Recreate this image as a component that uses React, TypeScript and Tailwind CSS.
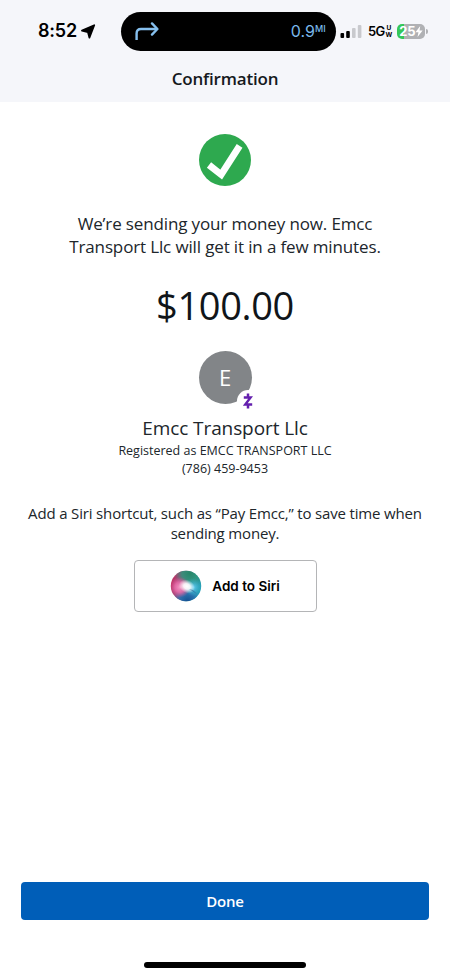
function StatusBar() {
  return (
    <div className="flex h-[62px] items-center text-black">
      <div className="flex w-[121px] items-center pl-[38px]">
        <span className="font-['Inter'] text-[18px] leading-none font-semibold tracking-[-0.2px]">8:52</span>
        <svg className="ml-[4px] h-[15px] w-[15px] shrink-0" viewBox="0 0 15 15">
          <path d="M1 6.6 L13.2 1.2 L8.4 13.6 L7 8.2 Z" fill="#000" stroke="#000" strokeWidth="1.8" strokeLinejoin="round" />
        </svg>
      </div>
      <div className="flex h-[39px] w-[215px] shrink-0 items-center justify-between rounded-full bg-black pr-[10px] pl-[13px] text-[#7ab8ea]">
        <svg className="h-[20px] w-[25px]" viewBox="0 0 25 20" fill="none" stroke="#86c0ee" strokeWidth="2.4" strokeLinejoin="round">
          <path d="M2.6 19 V12.5 Q2.6 8 7 8 H22" />
          <path d="M18 2.4 L23.4 8 L18 13.6" strokeLinecap="round" />
        </svg>
        <div className="flex items-start font-['Inter'] leading-none">
          <span className="text-[16px]">0.9</span>
          <span className="mt-px text-[9px] font-medium tracking-[0.2px]">MI</span>
        </div>
      </div>
      <div className="flex items-center pl-[4px]">
        <svg className="h-[15px] w-[23px]" viewBox="0 0 23 15">
          <rect x="0.5" y="9" width="3.6" height="5" rx="1" fill="#000" />
          <rect x="6.2" y="7" width="3.6" height="7" rx="1" fill="#000" />
          <rect x="12" y="4" width="3.6" height="10" rx="1" fill="#c8c9cd" />
          <rect x="17.8" y="1" width="3.6" height="13" rx="1" fill="#c8c9cd" />
        </svg>
        <span className="ml-[5px] font-['Inter'] text-[13px] leading-none font-semibold tracking-[-0.7px]">5G</span>
        <span className="ml-[1px] flex flex-col items-center font-['Inter'] text-[6.5px] leading-[7px] font-bold">
          <span>U</span>
          <span className="leading-[6px]">W</span>
        </span>
        <div className="ml-[5px] flex h-[15px] w-[28px] items-center justify-center rounded-[5px] bg-linear-to-r from-[#34c759] from-25% to-[#b0b1b4] to-25% text-white">
          <span className="font-['Inter'] text-[13px] leading-none font-bold tracking-[-0.2px]">25</span>
          <svg className="h-[11px] w-[8px]" viewBox="0 0 7 10">
            <path d="M4.6 0 L0.3 5.6 H3 L2.2 10 L6.8 4.2 H4 Z" fill="#fff" />
          </svg>
        </div>
        <div className="ml-[1px] h-[5px] w-[1.5px] rounded-r-full bg-[#b0b1b4]" />
      </div>
    </div>
  );
}

function SiriOrb() {
  return (
    <svg className="h-[32px] w-[32px]" viewBox="0 0 32 32">
      <defs>
        <linearGradient id="orbBase" x1="0" y1="0.3" x2="1" y2="0.6">
          <stop offset="0" stopColor="#c42f62" />
          <stop offset="0.38" stopColor="#8a5080" />
          <stop offset="0.65" stopColor="#2a8d90" />
          <stop offset="1" stopColor="#239fb4" />
        </linearGradient>
        <radialGradient id="orbGreen" cx="0.62" cy="0.08" r="0.5">
          <stop offset="0" stopColor="#268668" />
          <stop offset="0.5" stopColor="#30957b" stopOpacity="0.85" />
          <stop offset="1" stopColor="#30957b" stopOpacity="0" />
        </radialGradient>
        <radialGradient id="orbBlue" cx="0.55" cy="1" r="0.48">
          <stop offset="0" stopColor="#144f91" />
          <stop offset="0.5" stopColor="#286cad" stopOpacity="0.9" />
          <stop offset="1" stopColor="#3489c7" stopOpacity="0" />
        </radialGradient>
        <radialGradient id="orbPink" cx="0.3" cy="0.54" r="0.34">
          <stop offset="0" stopColor="#f59ac6" />
          <stop offset="0.5" stopColor="#ea6cab" stopOpacity="0.85" />
          <stop offset="1" stopColor="#e24f95" stopOpacity="0" />
        </radialGradient>
        <radialGradient id="orbCyan" cx="0.74" cy="0.54" r="0.3">
          <stop offset="0" stopColor="#63cdf2" />
          <stop offset="1" stopColor="#36b2d9" stopOpacity="0" />
        </radialGradient>
        <radialGradient id="orbGlow">
          <stop offset="0" stopColor="#fff" />
          <stop offset="0.4" stopColor="#fff" stopOpacity="0.9" />
          <stop offset="1" stopColor="#fff" stopOpacity="0" />
        </radialGradient>
      </defs>
      <circle cx="16" cy="16" r="15.2" fill="url(#orbBase)" />
      <circle cx="16" cy="16" r="15.2" fill="url(#orbGreen)" />
      <circle cx="16" cy="16" r="15.2" fill="url(#orbBlue)" />
      <circle cx="16" cy="16" r="15.2" fill="url(#orbPink)" />
      <circle cx="16" cy="16" r="15.2" fill="url(#orbCyan)" />
      <ellipse cx="17" cy="16" rx="8.5" ry="6.5" transform="rotate(25 16 16)" fill="url(#orbGlow)" />
      <path d="M19 19 L27 24 L23 20 Z" fill="#26568d" fillOpacity="0.5" />
    </svg>
  );
}

export default function App() {
  return (
    <div className="flex h-[976px] w-[450px] flex-col overflow-hidden bg-white font-['Open_Sans',sans-serif] text-[#20262b]">
      <header className="h-[102px] shrink-0 bg-[#f5f6fa]">
        <StatusBar />
        <h1 className="mt-[5px] text-center text-[17px] leading-[24px] font-semibold tracking-[-0.18px] text-[#15191d]">Confirmation</h1>
      </header>

      <main className="flex flex-1 flex-col items-center text-center whitespace-nowrap">
        <svg className="mt-[32px] h-[52px] w-[52px]" viewBox="0 0 52 52">
          <circle cx="26" cy="26" r="26" fill="#2ea94f" />
          <path d="M10 31 L22.2 40.6 L40.6 11.8" fill="none" stroke="#fff" strokeWidth="6.8" strokeLinejoin="miter" />
        </svg>

        <p className="mt-[26px] text-[17px] leading-[23px] tracking-[-0.14px]">
          We’re sending your money now. Emcc
          <br />
          Transport Llc will get it in a few minutes.
        </p>

        <p className="mt-[21px] text-[38px] leading-[52px] tracking-[-0.35px] text-[#101519]">$100.00</p>

        <div className="relative mt-[20px] flex h-[53px] w-[53px] items-center justify-center rounded-full bg-[#828588] text-[22px] leading-none text-white">
          <span className="-mt-px">E</span>
          <div className="absolute top-[39px] left-[38px] flex h-[22px] w-[22px] items-center justify-center rounded-full bg-white">
            <svg className="h-[16px] w-[10px]" viewBox="0 0 10 16" fill="none" stroke="#6420ae" strokeWidth="2.5">
              <path d="M0.8 4.4 H7.6 L2.2 11.6 H9.2" />
              <path d="M5 0.6 V4 M5 12 V15.4" />
            </svg>
          </div>
        </div>

        <h2 className="mt-[11px] text-[19px] leading-[26px] tracking-[-0.1px]">Emcc Transport Llc</h2>
        <p className="mt-px text-[12.5px] leading-[18px]">Registered as EMCC TRANSPORT LLC</p>
        <p className="text-[12.5px] leading-[18px]">(786) 459-9453</p>

        <p className="mt-[25px] text-[15px] leading-[20px] tracking-[-0.16px]">
          Add a Siri shortcut, such as “Pay Emcc,” to save time when
          <br />
          sending money.
        </p>

        <button className="mt-[17px] flex h-[52px] w-[183px] items-center justify-center gap-[10px] rounded-[4px] border border-[#b4b5b7] bg-white">
          <SiriOrb />
          <span className="font-['Inter'] text-[13.5px] font-semibold text-black">Add to Siri</span>
        </button>
      </main>

      <footer className="flex h-[94px] shrink-0 flex-col items-center">
        <button className="h-[38px] w-[408px] rounded-[4px] bg-[#005eb8] text-[15px] leading-[37px] font-semibold tracking-[-0.2px] text-white">Done</button>
        <div className="mt-[42px] h-[6px] w-[162px] rounded-full bg-black" />
      </footer>
    </div>
  );
}
